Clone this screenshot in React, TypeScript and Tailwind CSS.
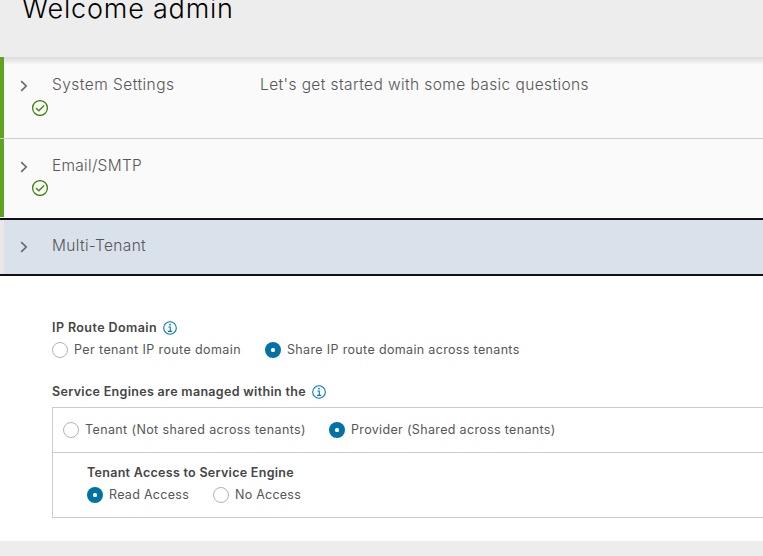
import type { ReactNode } from "react";

function Chevron() {
  return (
    <svg className="block h-[12px] w-[8px]" viewBox="0 0 8 12" fill="none" stroke="#666" strokeWidth="1.6">
      <path d="M1.2 1.1 6.2 6l-5 4.9" />
    </svg>
  );
}

function CheckCircle() {
  return (
    <svg className="block h-4 w-4" viewBox="0 0 16 16" fill="none" stroke="#42810e">
      <circle cx="8" cy="8" r="7.4" strokeWidth="1.25" />
      <path d="m3.9 8 2.9 2.8 5.3-5.3" strokeWidth="1.3" />
    </svg>
  );
}

function InfoCircle() {
  return (
    <svg className="block h-[14px] w-[14px]" viewBox="0 0 14 14" fill="none" stroke="#0079b8">
      <circle cx="7" cy="7" r="6.3" strokeWidth="1.1" />
      <path d="M5.4 6h1.9v4.2M5 10.4h4.2" strokeWidth="1.1" />
      <circle cx="7" cy="3.6" r="0.9" fill="#0079b8" stroke="none" />
    </svg>
  );
}

function Radio({ checked, children, className }: { checked?: boolean; children: ReactNode; className?: string }) {
  return (
    <label className={"flex h-4 items-center whitespace-nowrap text-[12.5px] leading-4 text-[#565656] " + (className ?? "")}>
      {checked ? (
        <span className="mr-[6px] flex h-4 w-4 shrink-0 items-center justify-center rounded-full bg-[#0072a3]">
          <span className="h-1 w-1 rounded-[1.5px] bg-white" />
        </span>
      ) : (
        <span className="mr-[6px] h-4 w-4 shrink-0 rounded-full border border-[#b3b3b3] bg-white" />
      )}
      <span>{children}</span>
    </label>
  );
}

export default function App() {
  return (
    <div className="flex h-[556px] w-[763px] flex-col overflow-hidden bg-white font-[Inter,'Open_Sans',sans-serif]">
      <header className="h-[57px] shrink-0 bg-[#ededed] pl-[22px]">
        <h1 className="-mt-[8px] text-[27px] leading-[34px] font-light tracking-[0.8px] text-black">Welcome admin</h1>
      </header>

      <section className="flex h-[81px] shrink-0 border-l-4 border-[#5fa31f] bg-[#fafafa] bg-linear-to-b from-[#dadada] to-[#fafafa] to-[8px]">
        <div className="w-12 shrink-0 pt-[23px] pl-4">
          <Chevron />
          <div className="mt-[8px] ml-3"><CheckCircle /></div>
        </div>
        <h2 className="w-[208px] pt-[18px] text-[15.5px] leading-5 font-light tracking-[0.46px] text-[#565656]">System Settings</h2>
        <p className="pt-[18px] text-[15.5px] leading-5 font-light tracking-[0.4px] text-[#565656]">Let's get started with some basic questions</p>
      </section>

      <div className="h-px shrink-0 bg-[#ccc]" />
      <section className="flex h-[78px] shrink-0 border-l-4 border-[#5fa31f] bg-[#fafafa]">
        <div className="w-12 shrink-0 pt-[22px] pl-4">
          <Chevron />
          <div className="mt-[7px] ml-3"><CheckCircle /></div>
        </div>
        <h2 className="pt-[17px] text-[15.5px] leading-5 font-light tracking-[0.28px] text-[#565656]">Email/SMTP</h2>
      </section>
      <div className="h-px shrink-0 bg-white" />

      <section className="h-[58px] shrink-0 border-y-2 border-[#111]">
        <div className="flex h-full border-l-4 border-[#e8e8e8] bg-[#d9e1ea]">
          <div className="w-12 shrink-0 pt-[21px] pl-4"><Chevron /></div>
          <h2 className="pt-[16px] text-[15.5px] leading-5 font-light tracking-[0.33px] text-[#565656]">Multi-Tenant</h2>
        </div>
      </section>

      <main className="h-[265px] shrink-0 pt-[44px] pl-[52px]">
        <div className="flex h-4 items-center gap-[6px] text-[12.5px] leading-4 font-semibold tracking-[0.417px] text-[#454545]">
          <h3>IP Route Domain</h3> <InfoCircle />
        </div>
        <div className="mt-[6px] flex">
          <Radio className="w-[213px] tracking-[0.399px]">Per tenant IP route domain</Radio>
          <Radio checked className="tracking-[0.343px]">Share IP route domain across tenants</Radio>
        </div>
        <div className="mt-[26px] flex h-4 items-center gap-[6px] text-[12.5px] leading-4 font-semibold tracking-[0.322px] text-[#454545]">
          <h3>Service Engines are managed within the</h3> <InfoCircle />
        </div>
        <div className="mt-[7px] h-[111px] border-y border-l border-[#ccc]">
          <div className="flex h-[45px] items-center border-b border-[#ccc] pl-[10px]">
            <Radio className="w-[266px] tracking-[0.386px]">Tenant (Not shared across tenants)</Radio>
            <Radio checked className="tracking-[0.335px]">Provider (Shared across tenants)</Radio>
          </div>
          <div className="pt-[12px] pl-[34px]">
            <h3 className="text-[12.5px] leading-4 font-semibold tracking-[0.29px] text-[#454545]">Tenant Access to Service Engine</h3>
            <div className="mt-[6px] flex">
              <Radio className="w-[126px] tracking-[0.29px]" checked>Read Access</Radio>
              <Radio className="tracking-[0.24px]">No Access</Radio>
            </div>
          </div>
        </div>
      </main>
      <footer className="flex-1 bg-[#ededed]" />
    </div>
  );
}
